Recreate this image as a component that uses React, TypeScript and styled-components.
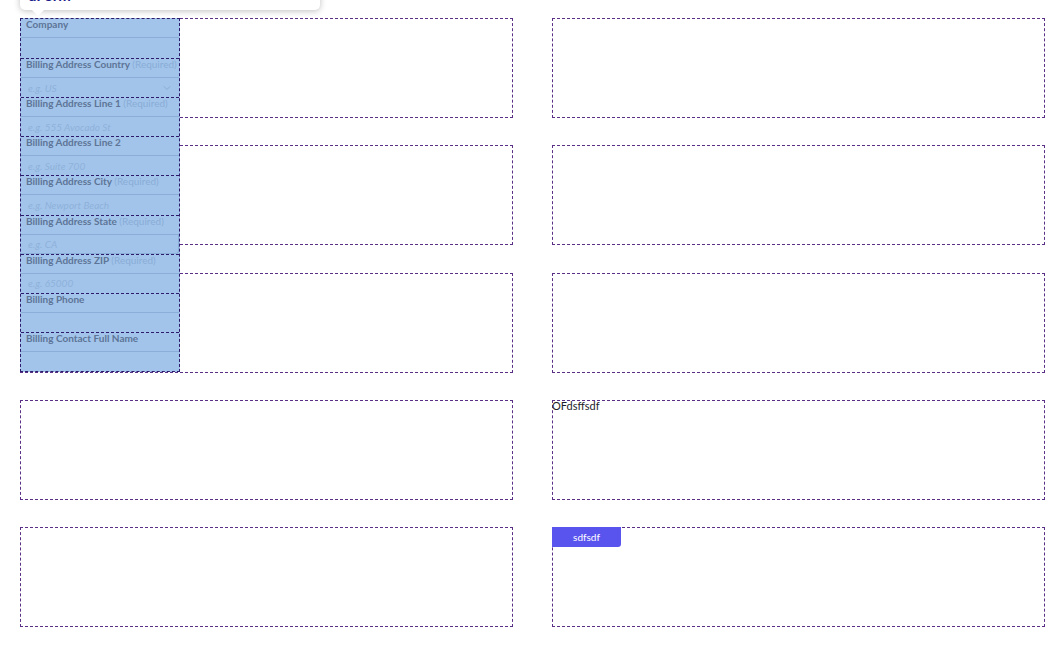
import styled, { createGlobalStyle } from "styled-components";
import { ChevronDown } from "lucide-react";

const GlobalStyle = createGlobalStyle`
  html, body {
    margin: 0;
    padding: 0;
    background: #ffffff;
    font-family: Lato, "Open Sans", sans-serif;
  }
`;

const Page = styled.div`
  position: relative;
  padding: 18px 11px 0 20px;
  width: 1056px;
  height: 646px;
  box-sizing: border-box;
  overflow: hidden;
`;

const Grid = styled.div`
  display: grid;
  grid-template-columns: 493px 493px;
  grid-auto-rows: 100px;
  column-gap: 39px;
  row-gap: 27.25px;
`;

const Cell = styled.div`
  border: 1px dashed #5a2f86;
  box-sizing: border-box;
  display: flex;
  flex-direction: column;
  align-items: flex-start;
`;

const CellText = styled.div`
  font-size: 11px;
  line-height: 11px;
  color: #1d1d2b;
  margin: -1px 0 0 -1px;
`;

const SmallButton = styled.button`
  margin: -1px 0 0 -1px;
  width: 69px;
  height: 20px;
  border: 0;
  border-radius: 0 0 3px 0;
  background: #5a54ef;
  color: #ffffff;
  font-family: Lato, sans-serif;
  font-size: 10px;
  padding: 0;
`;

const Popover = styled.div`
  position: absolute;
  left: 20px;
  top: -22px;
  width: 300px;
  height: 32px;
  background: #ffffff;
  border-radius: 5px;
  box-shadow: 0 1px 6px rgba(0, 0, 0, 0.25);
  box-sizing: border-box;
  padding: 7px 0 0 8px;
  z-index: 3;

  &::after {
    content: "";
    position: absolute;
    left: 12px;
    bottom: -6px;
    border-left: 6px solid transparent;
    border-right: 6px solid transparent;
    border-top: 6px solid #ffffff;
  }
`;

const PopoverTitle = styled.span`
  font-family: Lato, sans-serif;
  font-weight: 700;
  font-size: 15px;
  line-height: 15px;
  color: #1b1c8a;
`;

const FormPanel = styled.div`
  position: absolute;
  left: 20px;
  top: 18px;
  width: 160px;
  height: 354px;
  box-sizing: border-box;
  background: #a2c4ea;
  border: 1px dashed #2d1c6c;
  display: grid;
  grid-template-rows: repeat(9, 1fr);
  z-index: 2;
`;

const Field = styled.div<{ $first?: boolean }>`
  border-top: ${(p) => (p.$first ? "0" : "1px dashed #2d1c6c")};
  display: flex;
  flex-direction: column;
  min-height: 0;
`;

const Label = styled.div`
  height: 19px;
  box-sizing: border-box;
  border-bottom: 1px solid #8aaed8;
  padding: 0 0 0 5px;
  font-size: 10px;
  line-height: 11px;
  font-weight: 700;
  color: #5d7497;
  white-space: nowrap;
  overflow: hidden;
`;

const Required = styled.span`
  font-weight: 400;
  color: #89acd6;
`;

const InputRow = styled.div<{ $boxed?: boolean }>`
  flex: 1;
  display: flex;
  align-items: center;
  justify-content: space-between;
  padding: 0 6px 0 7px;
  font-size: 10px;
  font-style: italic;
  color: #8eb1da;
  border-bottom: ${(p) => (p.$boxed ? "1px solid #8aaed8" : "0")};
  border-right: ${(p) => (p.$boxed ? "1px solid #8aaed8" : "0")};
  border-radius: ${(p) => (p.$boxed ? "0 0 3px 0" : "0")};
`;

const fields: { label: string; required?: boolean; placeholder?: string; select?: boolean; boxed?: boolean }[] = [
  { label: "Company" },
  { label: "Billing Address Country", required: true, placeholder: "e.g. US", select: true },
  { label: "Billing Address Line 1", required: true, placeholder: "e.g. 555 Avocado St" },
  { label: "Billing Address Line 2", placeholder: "e.g. Suite 700" },
  { label: "Billing Address City", required: true, placeholder: "e.g. Newport Beach" },
  { label: "Billing Address State", required: true, placeholder: "e.g. CA", boxed: true },
  { label: "Billing Address ZIP", required: true, placeholder: "e.g. 65000" },
  { label: "Billing Phone" },
  { label: "Billing Contact Full Name" },
];

export default function App() {
  return (
    <Page>
      <GlobalStyle />
      <Popover>
        <PopoverTitle>uForm</PopoverTitle>
      </Popover>
      <FormPanel>
        {fields.map((f, i) => (
          <Field key={f.label} $first={i === 0}>
            <Label>
              {f.label} {f.required && <Required>(Required)</Required>}
            </Label>
            <InputRow $boxed={f.boxed}>
              <span>{f.placeholder}</span>
              {f.select && <ChevronDown size={12} strokeWidth={1.5} color="#7fa3cf" />}
            </InputRow>
          </Field>
        ))}
      </FormPanel>
      <Grid>
        <Cell />
        <Cell />
        <Cell />
        <Cell />
        <Cell />
        <Cell />
        <Cell />
        <Cell>
          <CellText>OFdsffsdf</CellText>
        </Cell>
        <Cell />
        <Cell>
          <SmallButton>sdfsdf</SmallButton>
        </Cell>
      </Grid>
    </Page>
  );
}
